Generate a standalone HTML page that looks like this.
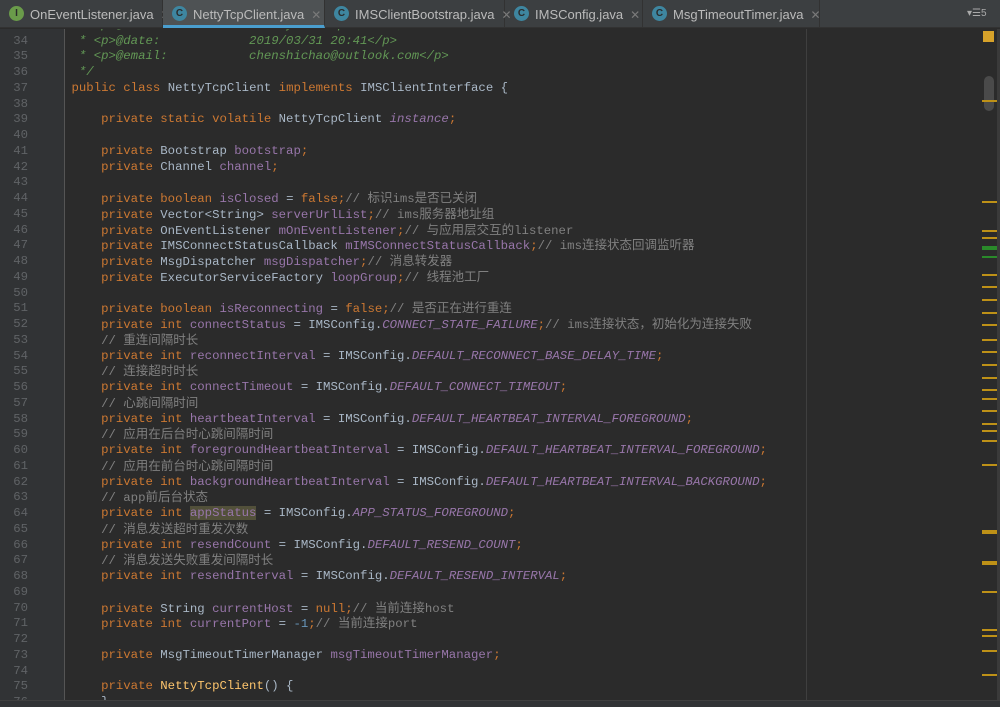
<!DOCTYPE html>
<html><head><meta charset="utf-8"><style>
*{margin:0;padding:0;box-sizing:border-box}
body{width:1000px;height:707px;overflow:hidden;background:#2b2b2b;position:relative;font-family:"Liberation Mono",monospace}
.tabs{position:absolute;left:0;top:0;width:1000px;height:28px;background:#3c3f41;border-bottom:1px solid #323232;font-family:"Liberation Sans",sans-serif;font-size:13px;color:#bbbbbb}
.tab{position:absolute;top:0;height:28px;border-right:1px solid #323232;padding-left:9px;line-height:29px;white-space:nowrap}
.tab.act{background:#4e5254;border-bottom:3px solid #4a9ece}
.ic{display:inline-block;width:15px;height:15px;border-radius:50%;background:#3e86a0;color:#2b2b2b;font-size:10px;line-height:15px;text-align:center;vertical-align:middle;margin-right:6px;font-weight:bold;position:relative;top:-2px}
.ic.g{background:#6a9b4a}
.x{color:#7a7a7a;margin-left:7px;font-size:12px}
.gut{position:absolute;left:0;top:29px;width:65px;height:678px;background:#313335;border-right:1px solid #555}
.code{position:absolute;left:0;top:29px;width:1000px;height:671px;overflow:hidden}
.ln{position:absolute;left:0;width:28px;text-align:right;color:#606366;font-size:12.3px;height:15.75px;line-height:15.75px}
.l{position:absolute;left:71.5px;white-space:pre;font-size:12.33px;color:#a9b7c6;height:15.75px;line-height:15.75px}
.k{color:#cc7832}.f{color:#9876aa}.s{color:#9876aa;font-style:italic}.c{color:#808080}.d{color:#629755;font-style:italic}.n{color:#6897bb}.m{color:#ffc66d}
.z{font-family:"Noto Sans CJK SC",sans-serif;font-size:12.5px;letter-spacing:0;line-height:1}
.hl{background:#52503a}
.rm{position:absolute;left:806px;top:29px;width:1px;height:671px;background:#3f3f3f}
.mk{position:absolute;left:982px;width:15px;height:2px;background:#be9117}
.sb{position:absolute;left:997px;top:29px;width:3px;height:671px;background:#3a3a3a}
.bot{position:absolute;left:0;top:700px;width:1000px;height:7px;background:#313335;border-top:1px solid #3f3f3f}
</style></head><body>
<div class="tabs">
<div class="tab" style="left:0;width:163px"><span class="ic g">I</span>OnEventListener.java<span class="x">✕</span></div>
<div class="tab act" style="left:163px;width:162px"><span class="ic">C</span>NettyTcpClient.java<span class="x">✕</span></div>
<div class="tab" style="left:325px;width:180px"><span class="ic">C</span>IMSClientBootstrap.java<span class="x">✕</span></div>
<div class="tab" style="left:505px;width:138px"><span class="ic">C</span>IMSConfig.java<span class="x">✕</span></div>
<div class="tab" style="left:643px;width:177px"><span class="ic">C</span>MsgTimeoutTimer.java<span class="x">✕</span></div>
<div style="position:absolute;left:967px;top:8px;font-size:10px;color:#aaa">▾☰5</div>
</div>
<div class="gut"></div>
<div class="rm"></div>
<div class="code" id="code"></div>
<div class="sb"></div>
<div style="position:absolute;left:984px;top:76px;width:10px;height:35px;border-radius:5px;background:#4a4a4a"></div>
<div style="position:absolute;left:983px;top:31px;width:11px;height:11px;background:#d7a22a"></div>
<div class="mk" style="top:100px"></div>
<div class="mk" style="top:201px"></div><div class="mk" style="top:230px"></div><div class="mk" style="top:237px"></div>
<div class="mk" style="top:246px;background:#2a8a2a;height:4px"></div><div class="mk" style="top:256px;background:#2a8a2a"></div>
<div class="mk" style="top:274px"></div><div class="mk" style="top:286px"></div><div class="mk" style="top:299px"></div><div class="mk" style="top:312px"></div><div class="mk" style="top:324px"></div><div class="mk" style="top:339px"></div><div class="mk" style="top:351px"></div><div class="mk" style="top:364px"></div><div class="mk" style="top:377px"></div><div class="mk" style="top:389px"></div><div class="mk" style="top:398px"></div>
<div class="mk" style="top:410px"></div><div class="mk" style="top:423px"></div><div class="mk" style="top:430px"></div><div class="mk" style="top:440px"></div><div class="mk" style="top:464px"></div>
<div class="mk" style="top:530px;height:4px"></div><div class="mk" style="top:561px;height:4px"></div>
<div class="mk" style="top:591px"></div><div class="mk" style="top:629px"></div><div class="mk" style="top:635px"></div><div class="mk" style="top:650px"></div><div class="mk" style="top:674px"></div>
<div class="bot"></div>
<div id="src" style="display:none">
<p data-n="33"><span class="d"> * &lt;p&gt;@author:          FreddyChen&lt;/p&gt;</span></p>
<p data-n="34"><span class="d"> * &lt;p&gt;@date:            2019/03/31 20:41&lt;/p&gt;</span></p>
<p data-n="35"><span class="d"> * &lt;p&gt;@email:           chenshichao@outlook.com&lt;/p&gt;</span></p>
<p data-n="36"><span class="d"> */</span></p>
<p data-n="37"><span class="k">public class </span>NettyTcpClient <span class="k">implements </span>IMSClientInterface {</p>
<p data-n="38"></p>
<p data-n="39">    <span class="k">private static volatile </span>NettyTcpClient <span class="s">instance</span><span class="k">;</span></p>
<p data-n="40"></p>
<p data-n="41">    <span class="k">private </span>Bootstrap <span class="f">bootstrap</span><span class="k">;</span></p>
<p data-n="42">    <span class="k">private </span>Channel <span class="f">channel</span><span class="k">;</span></p>
<p data-n="43"></p>
<p data-n="44">    <span class="k">private boolean </span><span class="f">isClosed </span>= <span class="k">false;</span><span class="c">// <span class="z">标识</span>ims<span class="z">是否已关闭</span></span></p>
<p data-n="45">    <span class="k">private </span>Vector&lt;String&gt; <span class="f">serverUrlList</span><span class="k">;</span><span class="c">// ims<span class="z">服务器地址组</span></span></p>
<p data-n="46">    <span class="k">private </span>OnEventListener <span class="f">mOnEventListener</span><span class="k">;</span><span class="c">// <span class="z">与应用层交互的</span>listener</span></p>
<p data-n="47">    <span class="k">private </span>IMSConnectStatusCallback <span class="f">mIMSConnectStatusCallback</span><span class="k">;</span><span class="c">// ims<span class="z">连接状态回调监听器</span></span></p>
<p data-n="48">    <span class="k">private </span>MsgDispatcher <span class="f">msgDispatcher</span><span class="k">;</span><span class="c">// <span class="z">消息转发器</span></span></p>
<p data-n="49">    <span class="k">private </span>ExecutorServiceFactory <span class="f">loopGroup</span><span class="k">;</span><span class="c">// <span class="z">线程池工厂</span></span></p>
<p data-n="50"></p>
<p data-n="51">    <span class="k">private boolean </span><span class="f">isReconnecting </span>= <span class="k">false;</span><span class="c">// <span class="z">是否正在进行重连</span></span></p>
<p data-n="52">    <span class="k">private int </span><span class="f">connectStatus </span>= IMSConfig.<span class="s">CONNECT_STATE_FAILURE</span><span class="k">;</span><span class="c">// ims<span class="z">连接状态，初始化为连接失败</span></span></p>
<p data-n="53">    <span class="c">// <span class="z">重连间隔时长</span></span></p>
<p data-n="54">    <span class="k">private int </span><span class="f">reconnectInterval </span>= IMSConfig.<span class="s">DEFAULT_RECONNECT_BASE_DELAY_TIME</span><span class="k">;</span></p>
<p data-n="55">    <span class="c">// <span class="z">连接超时时长</span></span></p>
<p data-n="56">    <span class="k">private int </span><span class="f">connectTimeout </span>= IMSConfig.<span class="s">DEFAULT_CONNECT_TIMEOUT</span><span class="k">;</span></p>
<p data-n="57">    <span class="c">// <span class="z">心跳间隔时间</span></span></p>
<p data-n="58">    <span class="k">private int </span><span class="f">heartbeatInterval </span>= IMSConfig.<span class="s">DEFAULT_HEARTBEAT_INTERVAL_FOREGROUND</span><span class="k">;</span></p>
<p data-n="59">    <span class="c">// <span class="z">应用在后台时心跳间隔时间</span></span></p>
<p data-n="60">    <span class="k">private int </span><span class="f">foregroundHeartbeatInterval </span>= IMSConfig.<span class="s">DEFAULT_HEARTBEAT_INTERVAL_FOREGROUND</span><span class="k">;</span></p>
<p data-n="61">    <span class="c">// <span class="z">应用在前台时心跳间隔时间</span></span></p>
<p data-n="62">    <span class="k">private int </span><span class="f">backgroundHeartbeatInterval </span>= IMSConfig.<span class="s">DEFAULT_HEARTBEAT_INTERVAL_BACKGROUND</span><span class="k">;</span></p>
<p data-n="63">    <span class="c">// app<span class="z">前后台状态</span></span></p>
<p data-n="64">    <span class="k">private int </span><span class="f hl">appStatus</span> = IMSConfig.<span class="s">APP_STATUS_FOREGROUND</span><span class="k">;</span></p>
<p data-n="65">    <span class="c">// <span class="z">消息发送超时重发次数</span></span></p>
<p data-n="66">    <span class="k">private int </span><span class="f">resendCount </span>= IMSConfig.<span class="s">DEFAULT_RESEND_COUNT</span><span class="k">;</span></p>
<p data-n="67">    <span class="c">// <span class="z">消息发送失败重发间隔时长</span></span></p>
<p data-n="68">    <span class="k">private int </span><span class="f">resendInterval </span>= IMSConfig.<span class="s">DEFAULT_RESEND_INTERVAL</span><span class="k">;</span></p>
<p data-n="69"></p>
<p data-n="70">    <span class="k">private </span>String <span class="f">currentHost </span>= <span class="k">null;</span><span class="c">// <span class="z">当前连接</span>host</span></p>
<p data-n="71">    <span class="k">private int </span><span class="f">currentPort </span>= <span class="n">-1</span><span class="k">;</span><span class="c">// <span class="z">当前连接</span>port</span></p>
<p data-n="72"></p>
<p data-n="73">    <span class="k">private </span>MsgTimeoutTimerManager <span class="f">msgTimeoutTimerManager</span><span class="k">;</span></p>
<p data-n="74"></p>
<p data-n="75">    <span class="k">private </span><span class="m">NettyTcpClient</span>() {</p>
<p data-n="76">    }</p>
</div>
<script>
var code=document.getElementById('code'),h='';
document.querySelectorAll('#src p').forEach(function(p){
var n=+p.getAttribute('data-n');var t=(n-34)*15.75+4.6;
h+='<div class="ln" style="top:'+t+'px">'+n+'</div><div class="l" style="top:'+t+'px">'+p.innerHTML+'</div>';
});
code.innerHTML=h;
</script>
</body></html>
